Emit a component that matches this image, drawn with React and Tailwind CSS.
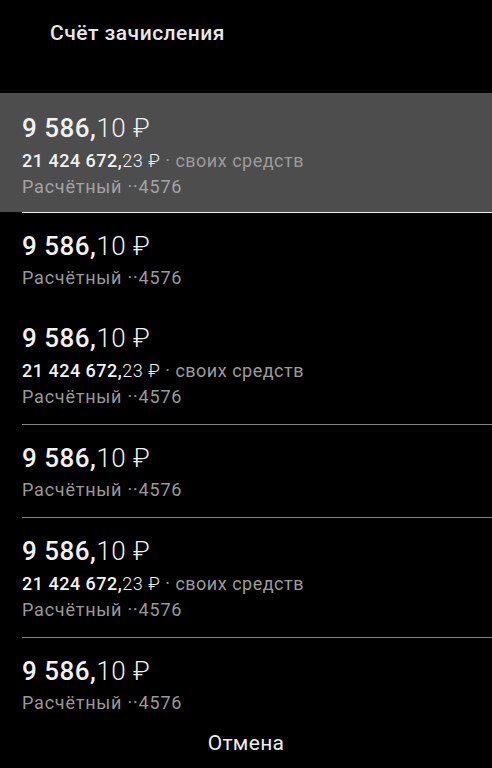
const accounts = [
  { id: 1, extra: true, selected: true, line: "white" },
  { id: 2, extra: false, line: null },
  { id: 3, extra: true, line: "gray" },
  { id: 4, extra: false, line: "gray" },
  { id: 5, extra: true, line: "gray" },
  { id: 6, extra: false, line: null },
];

function Amount() {
  return (
    <div className="h-[34px] text-[26px] leading-[34px] tracking-[0.5px] text-[#f2f2f2]">
      <span className="font-medium">9 586,</span>
      <span className="font-light">10 ₽</span>
    </div>
  );
}

function AccountRow({ extra, selected, line }) {
  return (
    <div>
      <div
        className={`flex flex-col px-[22px] ${selected ? "bg-[#4d4d4d] pt-[18px] pb-[12px]" : "pt-[16px] pb-[14px]"}`}
      >
        <Amount />
        {extra ? (
          <div className="mt-[3px] h-[26px] text-[18px] leading-[26px] tracking-[0.5px]">
            <span className="font-medium text-[#f2f2f2]">21 424 672,</span>
            <span className="font-light text-[#f2f2f2]">23 ₽</span>
            <span className="text-[#9c9c9c]"> · своих средств</span>
          </div>
        ) : null}
        <div
          className={`h-[26px] text-[18px] leading-[26px] tracking-[0.8px] ${
            selected ? "text-[#a3a3a3]" : "text-[#999999]"
          } ${extra ? "" : "mt-[2px]"}`}
        >
          Расчётный ··4576
        </div>
      </div>
      {line ? (
        <div className={`ml-[22px] h-px ${line === "white" ? "bg-[#f0f0f0]" : "bg-[#858585]"}`} />
      ) : null}
    </div>
  );
}

export default function App() {
  return (
    <div className="min-h-screen bg-black font-['Roboto',sans-serif]">
      <div className="h-[93px] pt-[19px] pl-[50px] text-[21px] font-medium leading-[28px] tracking-[0.5px] text-[#e8e8e8]">
        Счёт зачисления
      </div>
      {accounts.map((a) => (
        <AccountRow key={a.id} extra={a.extra} selected={a.selected} line={a.line} />
      ))}
      <div className="text-center text-[21px] leading-[27px] tracking-[0.3px] text-[#ededed]">Отмена</div>
    </div>
  );
}
